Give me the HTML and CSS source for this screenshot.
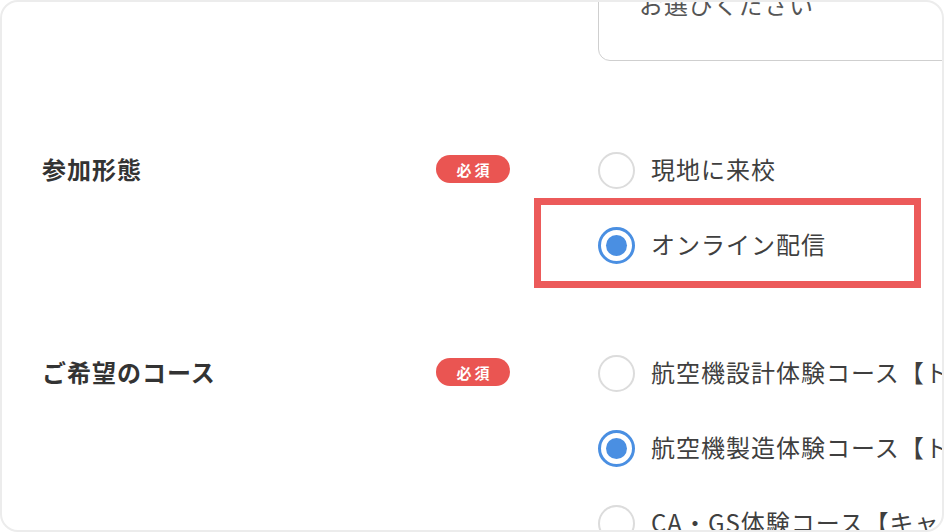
FILE: index.html
```html
<!DOCTYPE html>
<html lang="ja">
<head>
<meta charset="utf-8">
<title>フォーム</title>
<link rel="stylesheet" href="styles.css">
</head>
<body>
<div class="frame">
  <form class="form">
    <div class="row row-top">
      <div class="label"></div>
      <div class="badge-cell"></div>
      <div class="field">
        <div class="textarea">お選びください</div>
      </div>
    </div>

    <div class="row">
      <div class="label">参加形態</div>
      <div class="badge-cell"><span class="badge">必須</span></div>
      <div class="field options">
        <label class="option"><span class="radio"></span><span class="opt-text">現地に来校</span></label>
        <label class="option highlighted"><span class="radio checked"></span><span class="opt-text">オンライン配信</span><span class="highlight"></span></label>
      </div>
    </div>

    <div class="row">
      <div class="label">ご希望のコース</div>
      <div class="badge-cell"><span class="badge">必須</span></div>
      <div class="field options">
        <label class="option"><span class="radio"></span><span class="opt-text">航空機設計体験コース【トラベル】</span></label>
        <label class="option"><span class="radio checked"></span><span class="opt-text">航空機製造体験コース【トラベル】</span></label>
        <label class="option"><span class="radio"></span><span class="opt-text">CA・GS体験コース【キャビン】</span></label>
      </div>
    </div>
  </form>
</div>
</body>
</html>
```
FILE: styles.css
```css
* { box-sizing: border-box; }
html, body {
  margin: 0;
  padding: 0;
  background: #ffffff;
}
body {
  font-family: "Noto Sans CJK JP", "Noto Sans", sans-serif;
  color: #3a3a3a;
}
.frame {
  width: 944px;
  height: 532px;
  border: 2px solid #ececec;
  border-radius: 18px;
  overflow: hidden;
  background: #fff;
}
.form {
  margin-top: -53px;
  display: flex;
  flex-direction: column;
  gap: 90px;
}
.row {
  display: grid;
  grid-template-columns: 394px 162px 520px;
  padding-left: 40px;
  align-items: start;
}
.label {
  font-size: 24px;
  font-weight: 700;
  letter-spacing: 1px;
  line-height: 36px;
  color: #333;
}
.badge-cell {
  padding-top: 4px;
}
.badge {
  display: inline-flex;
  align-items: center;
  justify-content: center;
  width: 74px;
  height: 28px;
  border-radius: 14px;
  background: #ea5552;
  color: #fff;
  font-size: 15px;
  font-weight: 700;
  letter-spacing: 3px;
  padding-left: 3px;
}
.textarea {
  height: 112px;
  border: 1.5px solid #cfcfcf;
  border-radius: 12px;
  padding: 37px 0 0 40px;
  font-size: 24px;
  line-height: 34px;
  letter-spacing: 1px;
  color: #555;
  width: 600px;
}
.options {
  display: flex;
  flex-direction: column;
  gap: 37px;
}
.option {
  position: relative;
  display: flex;
  align-items: center;
  gap: 16px;
  height: 38px;
  white-space: nowrap;
}
.radio {
  flex: none;
  width: 37px;
  height: 37px;
  border-radius: 50%;
  border: 2px solid #dcdcdc;
  background: #fff;
}
.radio.checked {
  border: 3px solid #4a8fe2;
  display: flex;
  align-items: center;
  justify-content: center;
}
.radio.checked::after {
  content: "";
  width: 21px;
  height: 21px;
  border-radius: 50%;
  background: #4a8fe2;
}
.opt-text {
  font-size: 24px;
  letter-spacing: 1px;
  color: #3f3f3f;
  line-height: 34px;
  margin-top: -2px;
}
.highlight {
  position: absolute;
  left: -64px;
  top: -28px;
  width: 387px;
  height: 90px;
  border: 7px solid #ec5a5a;
  pointer-events: none;
}
```
